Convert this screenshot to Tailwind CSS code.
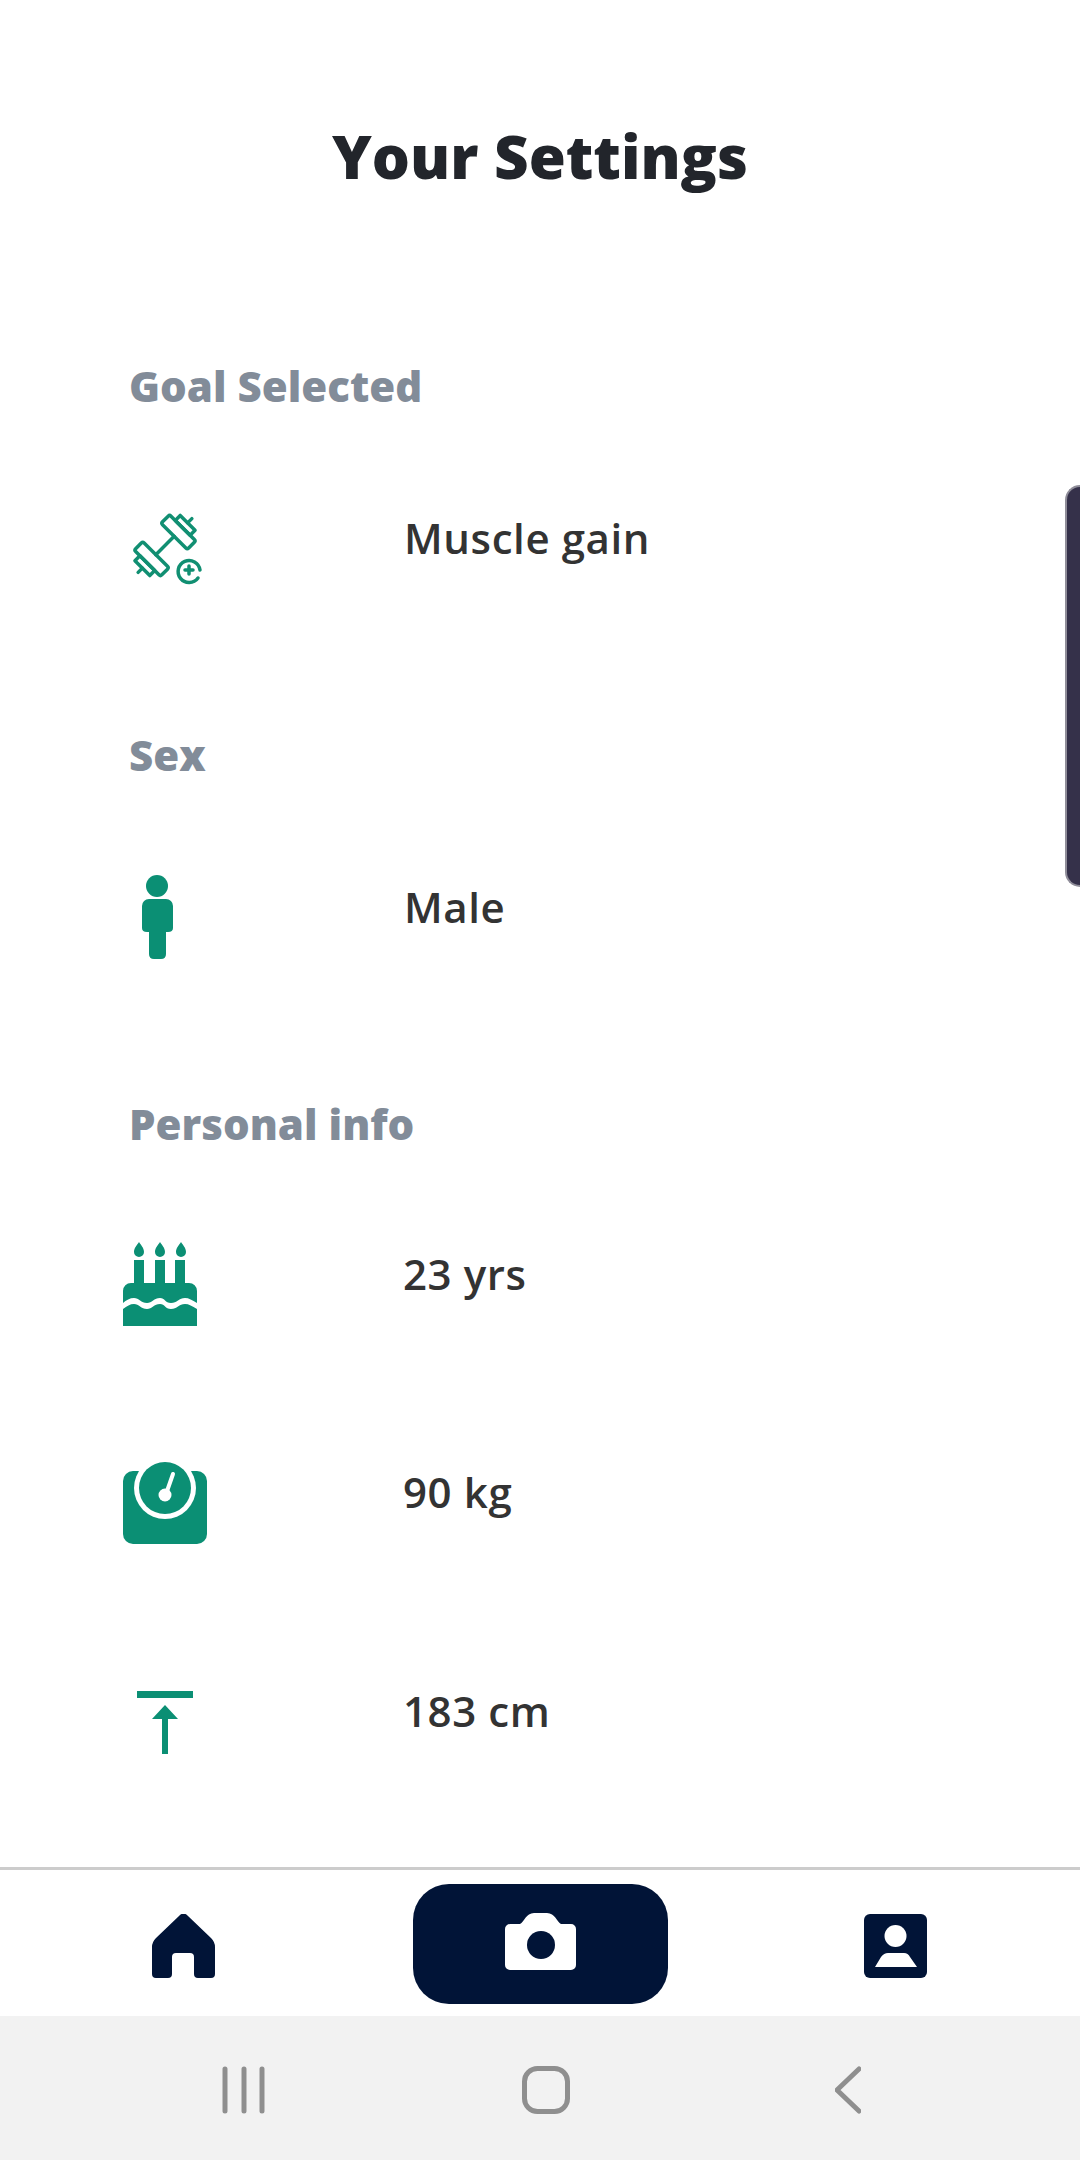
<!DOCTYPE html>
<html lang="en">
<head>
    <meta charset="UTF-8">
    <meta name="viewport" content="width=device-width, initial-scale=1.0">
    <title>Your Settings</title>
    <script src="https://cdn.jsdelivr.net/npm/@tailwindcss/browser@4"></script>
</head>
<body class="bg-white">
    <div class="relative flex flex-col w-[1080px] h-[2160px] overflow-hidden font-['Open_Sans',sans-serif]">
        <!-- Side handle -->
        <div class="absolute right-0 top-[485px] w-[15px] h-[402px] rounded-l-[18px] bg-[#35314a] border-l-2 border-y-2 border-[#8f8d99]"></div>

        <h1 class="mt-[116px] h-[80px] leading-[80px] text-center text-[60px] font-extrabold text-[#22252b]">Your Settings</h1>

        <main class="flex flex-col pl-[123px]">
            <h2 class="mt-[160px] h-[60px] leading-[60px] pl-[6px] text-[42px] font-extrabold text-[#828c99]">Goal Selected</h2>
            <div class="mt-[73px] flex items-center h-[100px]">
                <svg class="w-[100px] h-[100px] overflow-visible" viewBox="123 487 100 100" fill="none" stroke="#118f72" stroke-width="3.500" stroke-linejoin="round" stroke-linecap="round">
                    <g transform="rotate(-45 165 543.500)">
                        <path d="M152 543.500H178M127 543.500H133M197 543.500H203"/>
                        <rect x="140" y="525" width="12" height="37" rx="2"/>
                        <rect x="133" y="533" width="7" height="21"/>
                        <rect x="178" y="525" width="12" height="37" rx="2"/>
                        <rect x="190" y="533" width="7" height="21"/>
                    </g>
                    <path d="M198 576A11 11 0 1 1 200 568"/>
                    <path d="M189 564V572M185 568H193"/>
                </svg>
                <span class="ml-[181px] -mt-[3px] text-[42px] font-[550] tracking-[0.6px] text-[#333333]">Muscle gain</span>
            </div>

            <h2 class="mt-[136px] h-[60px] leading-[60px] pl-[6px] text-[42px] font-extrabold text-[#828c99]">Sex</h2>
            <div class="mt-[73px] flex items-center h-[100px]">
                <svg class="w-[100px] h-[100px] overflow-visible" viewBox="123 858 100 100" fill="#0b8f74">
                    <circle cx="157" cy="886" r="11"/>
                    <path d="M149 899H166A7 7 0 0 1 173 906V928Q173 932 168 932H166V954Q166 959 161 959H154Q149 959 149 954V932H147Q142 932 142 928V906A7 7 0 0 1 149 899Z"/>
                </svg>
                <span class="ml-[181px] -mt-[3px] text-[42px] font-[550] tracking-[0.6px] text-[#333333]">Male</span>
            </div>

            <h2 class="mt-[136px] h-[60px] leading-[60px] pl-[6px] text-[42px] font-extrabold text-[#828c99]">Personal info</h2>
            <div class="mt-[71px] flex items-center h-[100px]">
                <svg class="w-[100px] h-[100px] overflow-visible" viewBox="123 1225 100 100" fill="#0b8f74">
                    <path d="M139 1242C141 1245 144 1248 144 1252A5 5 0 0 1 134 1252C134 1248 137 1245 139 1242ZM160 1242C162 1245 165 1248 165 1252A5 5 0 0 1 155 1252C155 1248 158 1245 160 1242ZM181 1242C183 1245 186 1248 186 1252A5 5 0 0 1 176 1252C176 1248 179 1245 181 1242Z"/>
                    <path d="M134 1260H144V1283H155V1260H165V1283H175V1260H185V1283H189A8 8 0 0 1 197 1291V1303C192 1300 189 1298 185 1298C179 1298 177 1303 171 1303C165 1303 165 1298 160 1298C154 1298 152 1303 147 1303C141 1303 139 1298 134 1298C130 1298 126 1300 123 1303V1291A8 8 0 0 1 131 1283H134Z"/>
                    <path d="M123 1309C127 1306 130 1304 134 1304C139 1304 141 1309 147 1309C152 1309 154 1304 160 1304C165 1304 165 1309 171 1309C177 1309 179 1304 185 1304C189 1304 192 1306 197 1309V1326H123Z"/>
                </svg>
                <span class="ml-[180px] -mt-[3px] text-[42px] font-[550] tracking-[0.6px] text-[#333333]">23 yrs</span>
            </div>
            <div class="mt-[118px] flex items-center h-[100px]">
                <svg class="w-[100px] h-[100px] overflow-visible" viewBox="123 1443 100 100">
                    <rect x="123" y="1471" width="84" height="73" rx="10" fill="#0b8f74"/>
                    <circle cx="165" cy="1488" r="31" fill="#fff"/>
                    <circle cx="165" cy="1488" r="26" fill="#0b8f74"/>
                    <path d="M173 1474L166 1494" stroke="#fff" stroke-width="4" stroke-linecap="round"/>
                    <circle cx="165" cy="1495" r="6.500" fill="#fff"/>
                </svg>
                <span class="ml-[180px] -mt-[3px] text-[42px] font-[550] tracking-[0.6px] text-[#333333]">90 kg</span>
            </div>
            <div class="mt-[119px] flex items-center h-[100px]">
                <svg class="w-[100px] h-[100px] overflow-visible" viewBox="123 1662 100 100" fill="#0b8f74">
                    <rect x="137" y="1691" width="56" height="7"/>
                    <path d="M165 1705L178 1719H168V1754H162V1719H152Z"/>
                </svg>
                <span class="ml-[180px] -mt-[3px] text-[42px] font-[550] tracking-[0.6px] text-[#333333]">183 cm</span>
            </div>
        </main>

        <div class="flex-1"></div>

        <!-- Bottom nav -->
        <nav class="h-[149px] border-t-[3px] border-[#cccccc] flex items-start pl-[152px] pt-[14px]">
            <svg class="mt-[30px] w-[63px] h-[64px]" viewBox="152 1914 63 64" fill="#011437">
                <path d="M179 1916Q183.500 1911 188 1916L211 1938Q215 1942 215 1947V1974Q215 1978 211 1978H198Q194 1978 194 1974V1957Q194 1953 190 1953H176Q172 1953 172 1957V1974Q172 1978 168 1978H156Q152 1978 152 1974V1947Q152 1942 156 1938Z"/>
            </svg>
            <button class="ml-[198px] w-[255px] h-[120px] rounded-[36px] bg-[#011437] flex items-center justify-center">
                <svg class="w-[71px] h-[57px] -mt-[5px]" viewBox="504 1914 71 57">
                    <path fill="#fff" d="M509 1925H519C523 1923 525 1914 533 1914H546C554 1914 556 1923 560 1925H570A5 5 0 0 1 575 1930V1966A5 5 0 0 1 570 1971H509A5 5 0 0 1 504 1966V1930A5 5 0 0 1 509 1925Z"/>
                    <circle cx="540" cy="1946" r="14" fill="#011437"/>
                </svg>
            </button>
            <svg class="ml-[196px] mt-[30px] w-[63px] h-[64px]" viewBox="864 1914 63 64">
                <rect x="864" y="1914" width="63" height="64" rx="6" fill="#011437"/>
                <circle cx="895.500" cy="1936" r="11" fill="#fff"/>
                <path fill="#fff" d="M888 1953H904Q908 1953 910 1957L917 1967H875L881 1957Q884 1953 888 1953Z"/>
            </svg>
        </nav>

        <!-- System bar -->
        <div class="h-[144px] bg-[#f2f2f2] flex items-start pl-[222px] pt-[50px]">
            <svg class="w-[44px] h-[48px]" viewBox="222 2066 44 48" fill="none" stroke="#8f8f8f" stroke-width="5" stroke-linecap="round">
                <path d="M225 2069V2111M244 2069V2111M262 2069V2111"/>
            </svg>
            <svg class="ml-[256px] w-[48px] h-[48px]" viewBox="522 2066 48 48" fill="none" stroke="#8f8f8f" stroke-width="5">
                <rect x="524.500" y="2068.500" width="43" height="43" rx="13"/>
            </svg>
            <svg class="ml-[265px] w-[26px] h-[48px]" viewBox="835 2066 26 48" fill="none" stroke="#8f8f8f" stroke-width="5" stroke-linecap="round" stroke-linejoin="round">
                <path d="M859 2069L837 2090L859 2111"/>
            </svg>
        </div>
    </div>
</body>
</html>
